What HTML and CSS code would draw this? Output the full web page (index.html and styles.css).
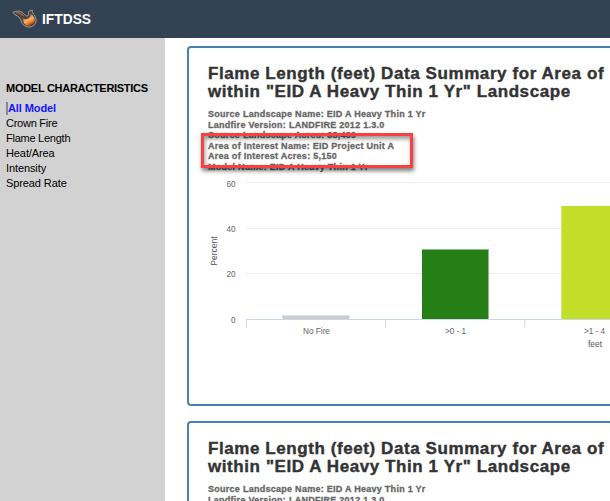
FILE: index.html
```html
<!DOCTYPE html>
<html lang="en">
<head>
<meta charset="utf-8">
<title>IFTDSS</title>
<link rel="stylesheet" href="styles.css">
</head>
<body>
<header class="topbar">
  <svg class="logo" width="26" height="20" viewBox="0 0 26 20">
    <defs><linearGradient id="flame" x1="0.3" y1="0.2" x2="0.7" y2="1"><stop offset="0" stop-color="#b9622c"/><stop offset=".4" stop-color="#ffb469"/><stop offset=".7" stop-color="#df741f"/><stop offset="1" stop-color="#642505"/></linearGradient></defs>
    <path d="M.8 3.500C5 1 10 2 12.500 5.500C14.500 8 17.500 7 16.500 4.500C16 2.500 17.500 1 20.500 1.200C19.500 3 21.500 5 23.200 7.500C25.800 12.500 23 18 17 18C11 18 9.500 13.500 8.500 10.500C7.500 7 3.500 7 .8 3.500Z" fill="#4b4542" stroke="#9a9ea0" stroke-width="1"/>
    <path d="M11 9.500C14.500 11.500 19 9 18.500 4.500C21 6 23 9 22.800 11.500C22.500 15 20 17 17 17C13 17 11 13.500 11 9.500Z" fill="url(#flame)"/>
    <path d="M4 3.800C7.500 3.200 9.500 4.500 11.500 7" fill="none" stroke="#a8673f" stroke-width="1.200"/>
  </svg>
  <span class="brand">IFTDSS</span>
</header>
<div class="layout">
  <nav class="sidebar">
    <h2>MODEL CHARACTERISTICS</h2>
    <ul>
      <li class="active">All Model</li>
      <li>Crown Fire</li>
      <li>Flame Length</li>
      <li>Heat/Area</li>
      <li>Intensity</li>
      <li>Spread Rate</li>
    </ul>
  </nav>
  <main class="content">
    <section class="panel">
      <h1>Flame Length (feet) Data Summary for Area of<br>within "EID A Heavy Thin 1 Yr" Landscape</h1>
      <div class="meta">
        <p>Source Landscape Name: EID A Heavy Thin 1 Yr</p>
        <p>Landfire Version: LANDFIRE 2012 1.3.0</p>
        <p>Source Landscape Acres: 38,489</p>
        <p>Area of Interest Name: EID Project Unit A</p>
        <p>Area of Interest Acres: 5,150</p>
        <p>Model Name: EID A Heavy Thin 1 Yr</p>
        <div class="highlight"></div>
      </div>
      <svg class="chart" width="421" height="190" viewBox="189 170 421 190">
        <g class="grid"><path d="M246 182.500H610M246 228.500H610M246 273.500H610"/></g>
        <rect x="282" y="315" width="67.500" height="4" fill="#e2e2e2"/>
        <rect x="283" y="316" width="66" height="3" fill="#cccccc"/>
        <rect x="422" y="249" width="67" height="70" fill="#8dbb85"/>
        <rect x="422" y="250" width="66" height="69" fill="#267f16"/>
        <rect x="561" y="206" width="49" height="113" fill="#d4e77a"/>
        <rect x="562" y="206" width="48" height="113" fill="#c2de28"/>
        <path class="axis" d="M246 319.500H610M246.500 320V327M385.500 320V327M524.800 320V327"/>
        <g class="ticks" text-anchor="end">
          <text x="235.500" y="187">60</text><text x="235.500" y="232">40</text><text x="235.500" y="277">20</text><text x="235.500" y="323">0</text>
        </g>
        <g class="ticks" text-anchor="middle">
          <text x="316.500" y="334">No Fire</text><text x="455.500" y="334">&gt;0 - 1</text><text x="594.500" y="334">&gt;1 - 4</text>
        </g>
        <text class="label" x="595" y="347" text-anchor="middle">feet</text>
        <text class="label" transform="translate(217 251) rotate(-90)" text-anchor="middle">Percent</text>
      </svg>
    </section>
    <section class="panel">
      <h1>Flame Length (feet) Data Summary for Area of<br>within "EID A Heavy Thin 1 Yr" Landscape</h1>
      <div class="meta">
        <p>Source Landscape Name: EID A Heavy Thin 1 Yr</p>
        <p>Landfire Version: LANDFIRE 2012 1.3.0</p>
      </div>
    </section>
  </main>
</div>
</body>
</html>
```
FILE: styles.css
```css
* { box-sizing: border-box; }
body { margin: 0; height: 501px; overflow: hidden; background: #fff; font-family: "Liberation Sans", Arial, sans-serif; }
.topbar { height: 38px; background: #334252; display: flex; align-items: flex-start; padding: 9px 0 0 12px; }
.logo { flex: none; }
.brand { margin: 3px 0 0 4px; color: #fff; font-size: 13.800px; font-weight: bold; line-height: 15px; }
.layout { display: flex; height: 463px; }
.sidebar { flex: none; width: 165px; background: #d2d2d2; padding: 43px 0 0 6px; }
.sidebar h2 { margin: 0; font-size: 11px; line-height: 14px; letter-spacing: -.28px; white-space: nowrap; color: #000; }
.sidebar ul { list-style: none; margin: 7px 0 0; padding: 0; font-size: 11px; line-height: 15px; letter-spacing: -.25px; color: #000; }
.sidebar li:nth-child(n+4) { letter-spacing: -.1px; }
.sidebar .active { color: #1414ff; font-weight: bold; border-left: 2px solid #888; line-height: 13px; margin: 1px 0; letter-spacing: -.1px; }
.content { width: 445px; flex: none; padding: 8px 0 0 22px; overflow: hidden; }
.panel { width: 460px; height: 360px; margin-bottom: 15px; border: 2px solid #4b81af; border-radius: 4px; padding: 17px 0 0 19px; background: #fff; }
.panel h1 { margin: 0; font-size: 17px; line-height: 18px; letter-spacing: .58px; color: #333; -webkit-text-stroke: .4px #333; white-space: nowrap; }
.meta { position: relative; margin-top: 8px; font-size: 9px; font-weight: bold; line-height: 10.500px; color: #666; -webkit-text-stroke: .3px #666; white-space: nowrap; letter-spacing: .27px; }
.meta p { margin: 0; }
.highlight { position: absolute; left: -7px; top: 24px; width: 212px; height: 35px; border: 3px solid #fa4141; box-shadow: 1px 3px 4px rgba(0,0,0,.5), inset 1px 3px 4px rgba(0,0,0,.4); }
.chart { display: block; margin: -2px 0 0 -19px; }
.grid path { stroke: #ededed; stroke-width: 1; }
.axis { fill: none; stroke: #ccd6eb; stroke-width: 1; }
.ticks { font-size: 8.200px; fill: #666; }
.label { font-size: 8.500px; fill: #555; }
```
